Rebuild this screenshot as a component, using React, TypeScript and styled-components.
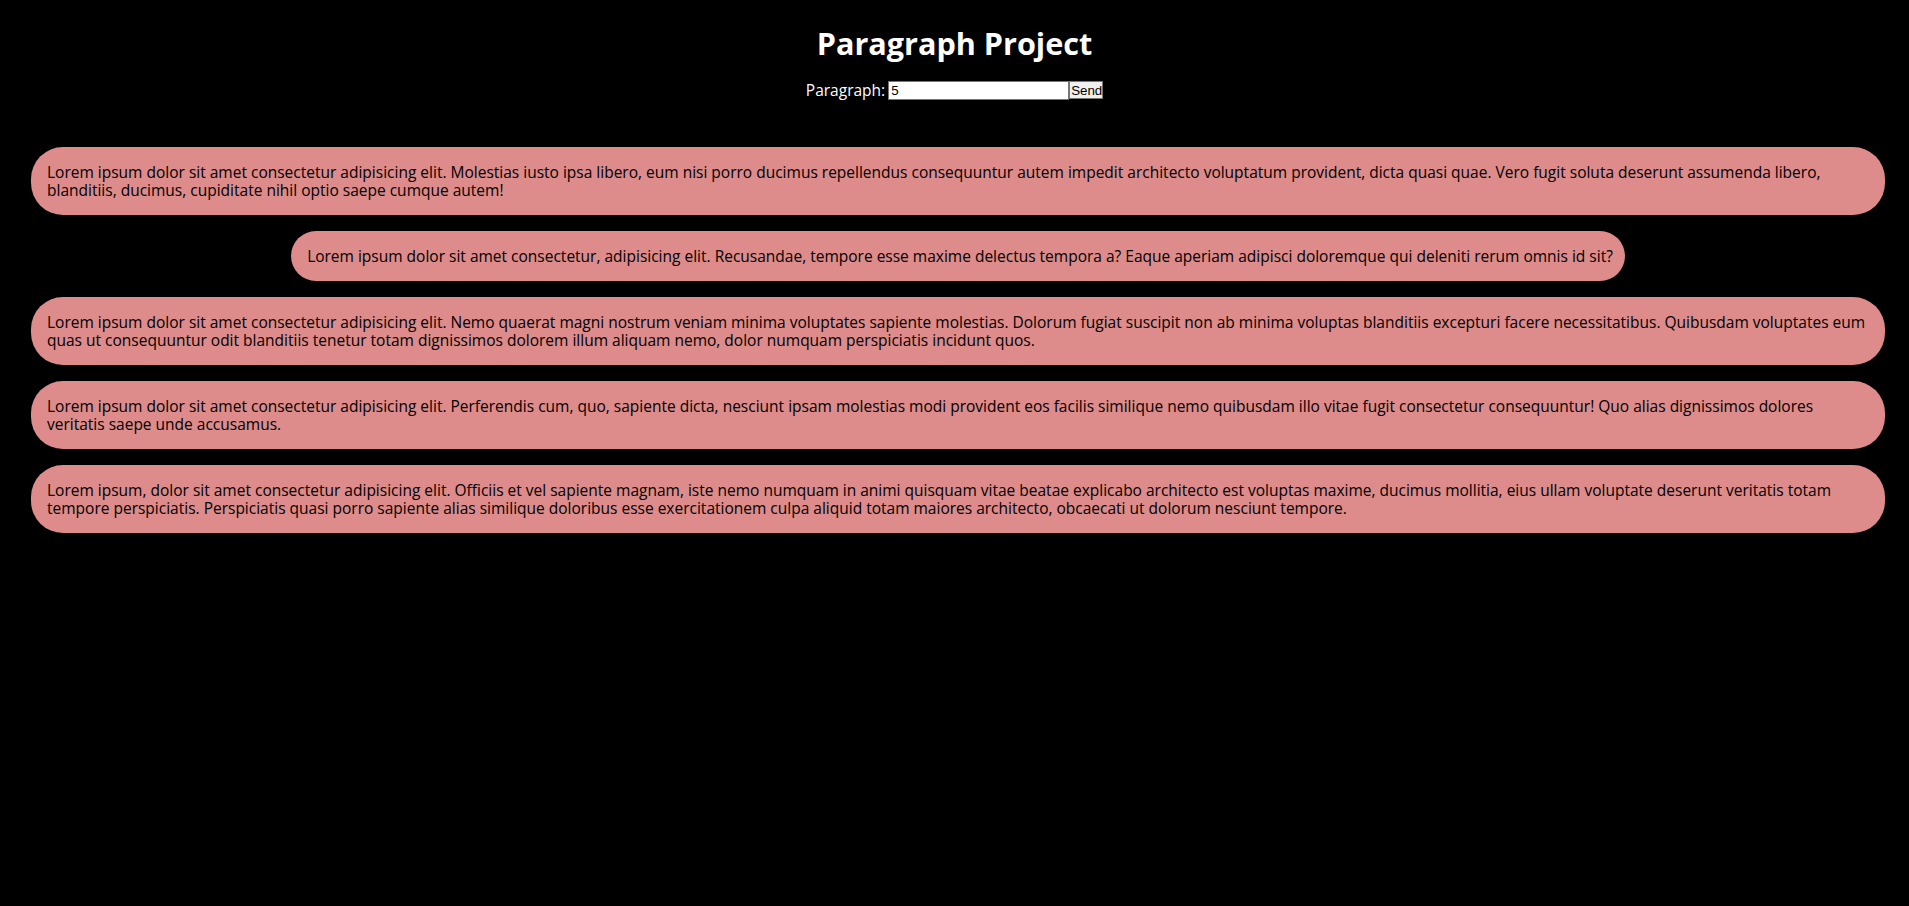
import React, { useState } from "react";
import styled, { createGlobalStyle } from "styled-components";

const GlobalStyle = createGlobalStyle`
  html, body {
    margin: 0;
    padding: 0;
    background: #000;
  }
  body {
    font-family: "Open Sans", "Liberation Sans", Arial, sans-serif;
    color: #fff;
  }
`;

const Page = styled.div`
  display: flex;
  flex-direction: column;
  min-height: 906px;
  background: #000;
`;

const Header = styled.header`
  display: flex;
  flex-direction: column;
  align-items: center;
  padding-top: 25px;
`;

const Title = styled.h1`
  margin: 0 0 17px;
  font-family: "Open Sans", sans-serif;
  font-size: 30.6px;
  line-height: 37px;
  font-weight: 700;
  color: #fff;
`;

const Form = styled.form`
  display: flex;
  align-items: center;
  font-size: 15.5px;
  color: #fff;
`;

const Label = styled.label`
  margin-right: 3px;
`;

const Input = styled.input`
  box-sizing: border-box;
  width: 181px;
  height: 19px;
  padding: 1px 2px;
  border: 1px solid #767676;
  font-family: "Liberation Sans", Arial, sans-serif;
  font-size: 13.33px;
  color: #000;
  background: #fff;
`;

const SendButton = styled.button`
  box-sizing: border-box;
  width: 34px;
  height: 18px;
  padding: 0 1px;
  border: 1px solid #767676;
  background: #efefef;
  font-family: "Liberation Sans", Arial, sans-serif;
  font-size: 13.33px;
  color: #000;
`;

const List = styled.main`
  display: flex;
  flex-direction: column;
  align-items: center;
  gap: 16px;
  padding: 46px 24px 0 31px;
`;

const Card = styled.p`
  margin: 0;
  padding: 16px 12px 16px 16px;
  border-radius: 32px;
  background: #dd8b8b;
  color: #000;
  font-size: 15.5px;
  line-height: 18px;
`;

const paragraphs = [
  "Lorem ipsum dolor sit amet consectetur adipisicing elit. Molestias iusto ipsa libero, eum nisi porro ducimus repellendus consequuntur autem impedit architecto voluptatum provident, dicta quasi quae. Vero fugit soluta deserunt assumenda libero, blanditiis, ducimus, cupiditate nihil optio saepe cumque autem!",
  "Lorem ipsum dolor sit amet consectetur, adipisicing elit. Recusandae, tempore esse maxime delectus tempora a? Eaque aperiam adipisci doloremque qui deleniti rerum omnis id sit?",
  "Lorem ipsum dolor sit amet consectetur adipisicing elit. Nemo quaerat magni nostrum veniam minima voluptates sapiente molestias. Dolorum fugiat suscipit non ab minima voluptas blanditiis excepturi facere necessitatibus. Quibusdam voluptates eum quas ut consequuntur odit blanditiis tenetur totam dignissimos dolorem illum aliquam nemo, dolor numquam perspiciatis incidunt quos.",
  "Lorem ipsum dolor sit amet consectetur adipisicing elit. Perferendis cum, quo, sapiente dicta, nesciunt ipsam molestias modi provident eos facilis similique nemo quibusdam illo vitae fugit consectetur consequuntur! Quo alias dignissimos dolores veritatis saepe unde accusamus.",
  "Lorem ipsum, dolor sit amet consectetur adipisicing elit. Officiis et vel sapiente magnam, iste nemo numquam in animi quisquam vitae beatae explicabo architecto est voluptas maxime, ducimus mollitia, eius ullam voluptate deserunt veritatis totam tempore perspiciatis. Perspiciatis quasi porro sapiente alias similique doloribus esse exercitationem culpa aliquid totam maiores architecto, obcaecati ut dolorum nesciunt tempore.",
];

export default function App() {
  const [count, setCount] = useState("5");
  const [shown, setShown] = useState(5);
  return (
    <Page>
      <GlobalStyle />
      <Header>
        <Title>Paragraph Project</Title>
        <Form
          onSubmit={(e) => {
            e.preventDefault();
            const n = parseInt(count, 10);
            setShown(Number.isNaN(n) ? 0 : n);
          }}
        >
          <Label htmlFor="count">Paragraph:</Label>
          <Input id="count" value={count} onChange={(e) => setCount(e.target.value)} />
          <SendButton type="submit">Send</SendButton>
        </Form>
      </Header>
      <List>
        {paragraphs.slice(0, shown).map((p, i) => (
          <Card key={i}>{p}</Card>
        ))}
      </List>
    </Page>
  );
}
